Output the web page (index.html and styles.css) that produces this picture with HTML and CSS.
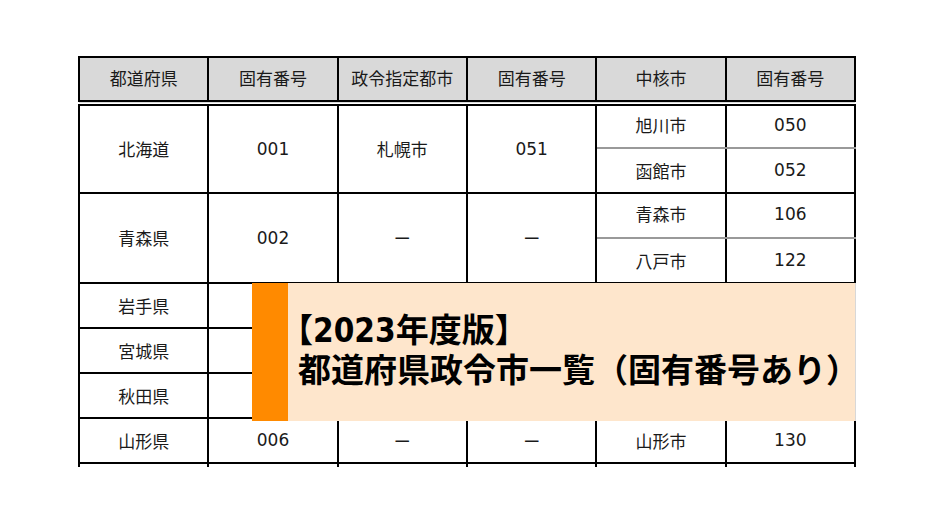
FILE: index.html
```
<!DOCTYPE html>
<html lang="ja">
<head>
<meta charset="utf-8">
<title>都道府県政令市一覧</title>
<link rel="stylesheet" href="styles.css">
</head>
<body>
<div class="sheet">
  <table class="codes">
    <colgroup>
      <col><col><col><col><col><col>
    </colgroup>
    <thead>
      <tr>
        <th>都道府県</th><th>固有番号</th><th>政令指定都市</th><th>固有番号</th><th>中核市</th><th>固有番号</th>
      </tr>
    </thead>
    <tbody>
      <tr>
        <td rowspan="2">北海道</td><td rowspan="2">001</td><td rowspan="2">札幌市</td><td rowspan="2">051</td><td class="sub-top">旭川市</td><td class="sub-top">050</td>
      </tr>
      <tr>
        <td>函館市</td><td>052</td>
      </tr>
      <tr>
        <td rowspan="2">青森県</td><td rowspan="2">002</td><td rowspan="2">ー</td><td rowspan="2">ー</td><td class="sub-top">青森市</td><td class="sub-top">106</td>
      </tr>
      <tr>
        <td>八戸市</td><td>122</td>
      </tr>
      <tr>
        <td>岩手県</td><td></td><td></td><td></td><td></td><td></td>
      </tr>
      <tr>
        <td>宮城県</td><td></td><td></td><td></td><td></td><td></td>
      </tr>
      <tr>
        <td>秋田県</td><td></td><td></td><td></td><td></td><td></td>
      </tr>
      <tr>
        <td>山形県</td><td>006</td><td>ー</td><td>ー</td><td>山形市</td><td>130</td>
      </tr>
      <tr>
        <td></td><td></td><td></td><td></td><td></td><td></td>
      </tr>
    </tbody>
  </table>

  <div class="banner">
    <div class="banner-accent"></div>
    <div class="banner-body">
      <p class="banner-line first">【2023年度版】</p>
      <p class="banner-line">都道府県政令市一覧（固有番号あり）</p>
    </div>
  </div>
</div>
</body>
</html>
```
FILE: styles.css
```
html, body {
  margin: 0;
  padding: 0;
  background: #ffffff;
}

body {
  font-family: "DejaVu Sans", "Noto Sans CJK JP", sans-serif;
  color: #1a1a1a;
}

.sheet {
  position: relative;
  width: 946px;
  height: 467px;
  overflow: hidden;
  box-sizing: border-box;
  padding: 56px 0 0 78px;
}

.codes {
  border-collapse: collapse;
  table-layout: fixed;
  width: 778px;
  font-size: 17px;
}

.codes th,
.codes td {
  border: 2px solid #000;
  padding: 0 0 1px;
  text-align: center;
  vertical-align: middle;
  font-weight: normal;
  white-space: nowrap;
}

.codes thead tr {
  height: 46px;
}

.codes th {
  background: #d9d9d9;
  border-bottom: 6px double #000;
  padding-bottom: 3px;
}

.codes tbody tr {
  height: 45px;
}

.codes td.sub-top {
  border-bottom: 2px solid #999;
  padding-bottom: 4px;
}

.banner {
  position: absolute;
  left: 252px;
  top: 283px;
  width: 604px;
  height: 138px;
  display: flex;
  background: #fee6cc;
  border-right: 1px solid #d8d8d8;
  box-sizing: border-box;
}

.banner-accent {
  width: 36px;
  flex: none;
  background: #ff8a00;
}

.banner-body {
  flex: 1;
  display: flex;
  flex-direction: column;
  justify-content: center;
  padding-left: 10px;
  padding-bottom: 2px;
  font-family: "DejaVu Sans Condensed", "Noto Sans CJK JP", sans-serif;
  font-weight: 700;
  font-size: 33px;
  line-height: 40px;
  color: #000;
}

.banner-line {
  margin: 0;
  white-space: nowrap;
}

.banner-line.first {
  margin-left: -18px;
}
```
